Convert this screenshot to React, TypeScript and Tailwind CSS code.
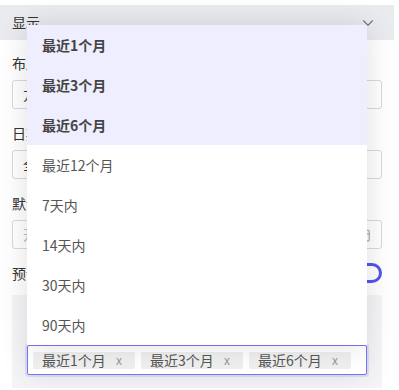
import { ChevronDown, Calendar } from "lucide-react";

const options = [
  { label: "最近1个月", active: true },
  { label: "最近3个月", active: true },
  { label: "最近6个月", active: true },
  { label: "最近12个月", active: false },
  { label: "7天内", active: false },
  { label: "14天内", active: false },
  { label: "30天内", active: false },
  { label: "90天内", active: false },
];

const tags = ["最近1个月", "最近3个月", "最近6个月"];

function Field({ label, value, placeholder, icon }: { label: string; value?: string; placeholder?: string; icon?: boolean }) {
  return (
    <div className="flex flex-col">
      <div className="h-[22px] leading-[22px] text-[14px] text-[#333]">{label}</div>
      <div className="mt-[6px] h-[29px] border border-[#d9d9d9] rounded-[3px] flex items-center px-[10px] text-[14px]">
        <span className={value ? "text-[#333]" : "text-[#bbb]"}>{value ?? placeholder}</span>
        {icon && <Calendar size={14} className="ml-auto text-[#aaa]" />}
      </div>
    </div>
  );
}

export default function App() {
  return (
    <div
      className="w-[399px] h-[390px] bg-white overflow-hidden"
      style={{ fontFamily: '"Noto Sans CJK SC", "Noto Sans", sans-serif' }}
    >
      <div className="w-[394px] pt-[5px]">
        <div className="h-[35px] bg-[#e9ebee] flex items-center px-3 text-[14px] text-[#333]">
          <span>显示</span>
          <ChevronDown size={18} strokeWidth={1.5} className="ml-auto mr-[5px] text-[#777]" />
        </div>

        <div className="px-3 pt-[12px] flex flex-col gap-[13px]">
          <Field label="布局" value="方式一" />
          <Field label="日期类型" value="全部" />
          <Field label="默认值" placeholder="开始日期 - 结束日期" icon />
          <div className="h-[22px] flex items-center justify-between text-[14px] text-[#333]">
            <span>预设范围</span>
            <div className="w-[36px] h-[20px] rounded-full border-[3px] border-[#5056f0] bg-white" />
          </div>
        </div>

        <div className="mx-3 mt-[11px] h-[93px] bg-[#f5f5f7] px-[15px] pt-[50px]">
          <div className="relative">
            <div className="absolute bottom-full left-0 right-0 bg-white shadow-[0_0_28px_rgba(0,0,0,0.13)] flex flex-col">
              {options.map((o) => (
                <div
                  key={o.label}
                  className={`h-[40px] flex items-center px-[15px] text-[14px] ${
                    o.active ? "bg-[#eeeefe] font-bold text-[#444]" : "text-[#555]"
                  }`}
                >
                  {o.label}
                </div>
              ))}
            </div>
            <div className="h-[30px] bg-white border border-[#7676f0] rounded-[2px] shadow-[0_0_0_2px_rgba(118,118,240,0.18),0_0_28px_rgba(0,0,0,0.1)] flex items-center gap-[6px] px-[5px]">
              {tags.map((t) => (
                <div key={t} className="h-[17px] w-[102px] bg-[#efefef] rounded-[2px] flex items-center pl-[9px] text-[14px] text-[#555]">
                  <span>{t}</span>
                  <span className="ml-auto mr-[13px] text-[12px] text-[#999]">x</span>
                </div>
              ))}
            </div>
          </div>
        </div>
      </div>
    </div>
  );
}
